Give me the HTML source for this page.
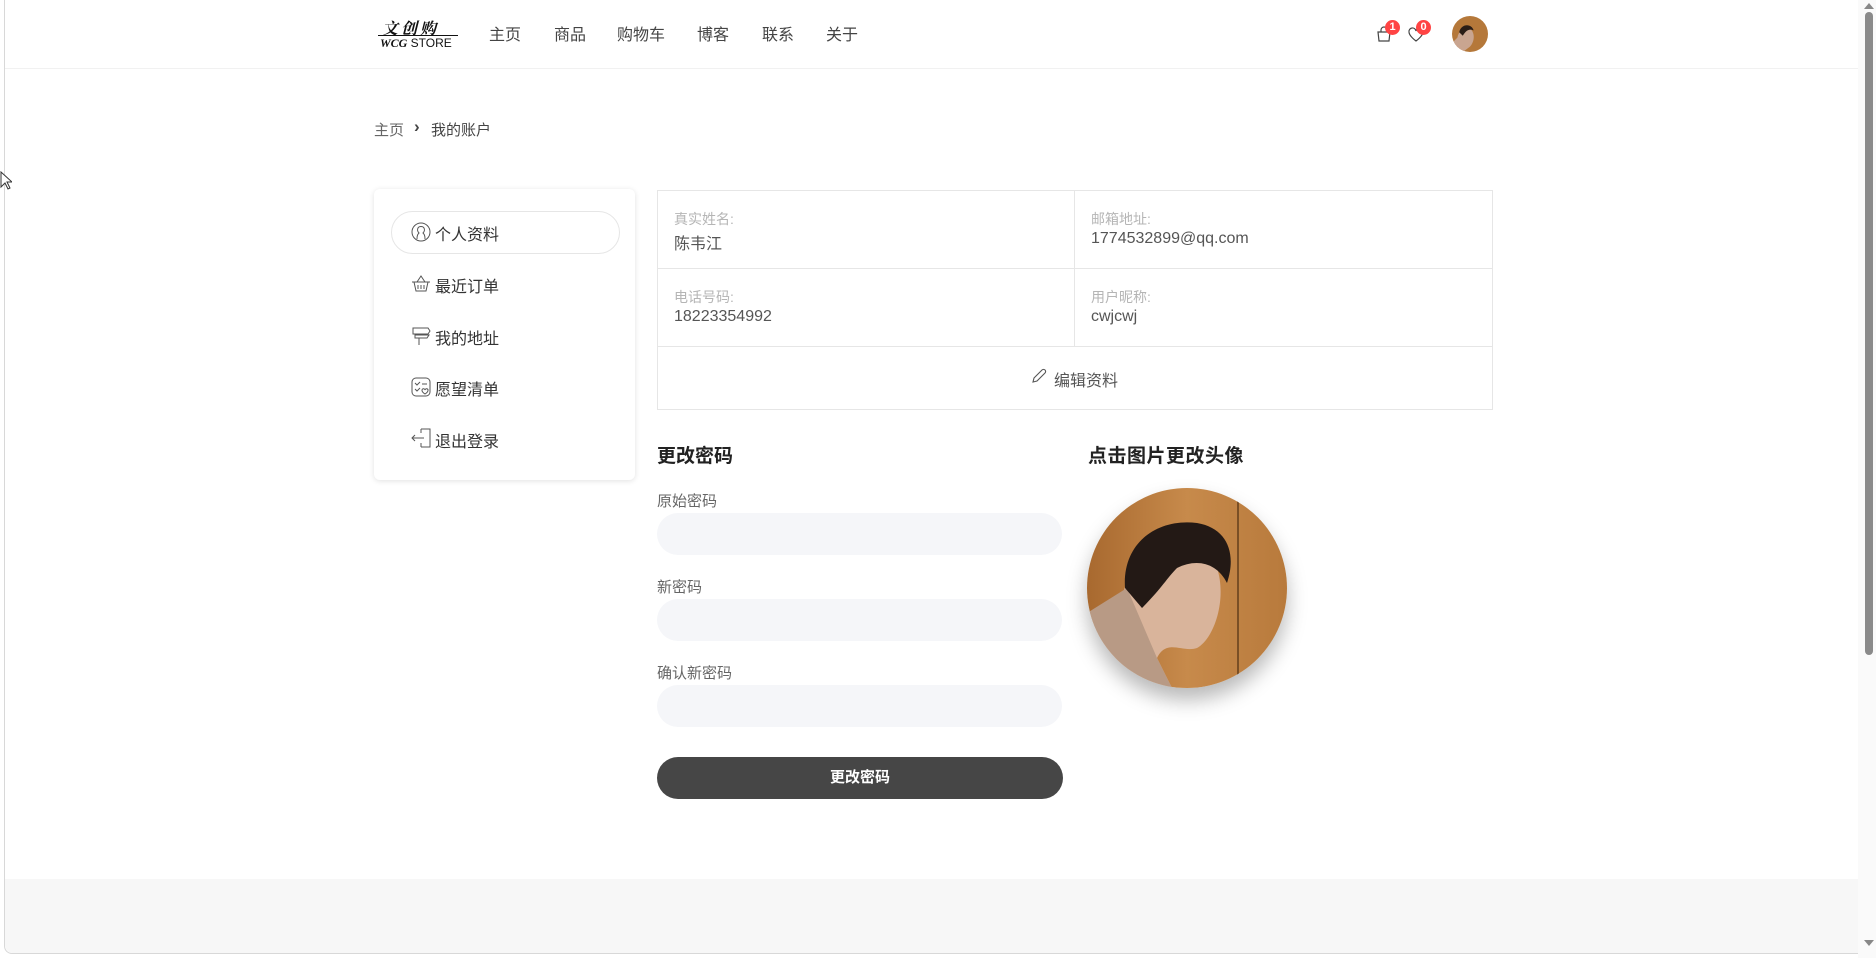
<!DOCTYPE html>
<html><head><meta charset="utf-8"><style>
*{margin:0;padding:0;box-sizing:border-box}
body{width:1876px;height:958px;overflow:hidden;background:#fff;font-family:"Liberation Sans","Noto Sans CJK SC",sans-serif;color:#333;position:relative}
.a{position:absolute}
.nav{font-size:16px;color:#444;top:21px}
.lbl{font-size:14px;color:#b5b5b5}
.val{font-size:16px;color:#555}
.menu{font-size:16px;color:#333;left:435px}
.inp{left:657px;width:405px;height:42px;border-radius:21px;background:#f5f6f9}
.flbl{left:657px;font-size:15px;color:#666}
</style></head><body>
<div class="a" style="left:4px;top:0;width:1854px;height:954px;border-left:1px solid #d8d8d8;border-bottom:1px solid #d8d8d8;border-bottom-left-radius:8px"></div>
<div class="a" style="left:5px;top:68px;width:1853px;height:1px;background:#f1f1f1"></div>
<div class="a" style="left:5px;top:879px;width:1853px;height:74px;background:#f7f7f7;border-bottom-left-radius:8px"></div>
<div class="a" style="left:1858px;top:0;width:18px;height:958px;background:#fafafa"></div>
<div class="a" style="left:1865px;top:12px;width:8px;height:643px;background:#8a8a8a;border-radius:4px"></div>
<div class="a" style="left:1864px;top:3px;width:0;height:0;border-left:5px solid transparent;border-right:5px solid transparent;border-bottom:6px solid #888"></div>
<div class="a" style="left:1864px;top:940px;width:0;height:0;border-left:5px solid transparent;border-right:5px solid transparent;border-top:6px solid #888"></div>
<!-- logo -->
<div class="a" style="left:382px;top:16px;font-family:'Noto Serif CJK SC',serif;font-size:16px;font-style:italic;font-weight:bold;color:#111;letter-spacing:3px">文创购</div>
<div class="a" style="left:378px;top:35px;width:80px;height:1px;background:#111"></div>
<div class="a" style="left:380px;top:36px;font-size:12px;color:#111;white-space:nowrap"><i style="font-family:'Liberation Serif',serif;font-weight:bold">WCG</i> STORE</div>
<div class="a nav" style="left:489px">主页</div>
<div class="a nav" style="left:554px">商品</div>
<div class="a nav" style="left:617px">购物车</div>
<div class="a nav" style="left:697px">博客</div>
<div class="a nav" style="left:762px">联系</div>
<div class="a nav" style="left:826px">关于</div>
<svg class="a" style="left:1375px;top:25px" width="18" height="18" viewBox="0 0 18 18" fill="none" stroke="#444" stroke-width="1.2"><path d="M3 7h12l-1 9H4z"/><path d="M6 7V5a3 3 0 0 1 6 0v2"/></svg>
<div class="a" style="left:1385px;top:20px;width:15px;height:15px;border-radius:50%;background:#f44;color:#fff;font-size:11px;font-weight:bold;text-align:center;line-height:15px">1</div>
<svg class="a" style="left:1407px;top:26px" width="18" height="17" viewBox="0 0 18 17" fill="none" stroke="#444" stroke-width="1.2"><path d="M9 15S2 10 2 6a3.5 3.5 0 0 1 7-1 3.5 3.5 0 0 1 7 1c0 4-7 9-7 9z"/></svg>
<div class="a" style="left:1416px;top:20px;width:15px;height:15px;border-radius:50%;background:#f44;color:#fff;font-size:11px;font-weight:bold;text-align:center;line-height:15px">0</div>
<svg class="a" style="left:1452px;top:16px" width="36" height="36" viewBox="0 0 200 200"><defs><clipPath id="c1"><circle cx="100" cy="100" r="100"/></clipPath></defs><g clip-path="url(#c1)"><rect width="200" height="200" fill="#b5783a"/><path d="M30 120 C40 70 80 60 110 80 C130 110 120 150 100 170 L60 200 L0 200 L0 150Z" fill="#c9a590"/><path d="M40 90 C50 40 110 40 120 80 C100 70 80 75 60 110Z" fill="#2a1d16"/></g></svg>
<!-- breadcrumb -->
<div class="a" style="left:374px;top:119px;font-size:15px;color:#666">主页</div>
<div class="a" style="left:414px;top:117px;font-size:17px;font-weight:bold;color:#444">›</div>
<div class="a" style="left:431px;top:119px;font-size:15px;color:#444">我的账户</div>
<!-- sidebar -->
<div class="a" style="left:374px;top:189px;width:261px;height:291px;border-radius:6px;box-shadow:0 1px 6px rgba(0,0,0,.12)"></div>
<div class="a" style="left:391px;top:211px;width:229px;height:43px;border-radius:22px;border:1px solid #e6e6e6"></div>
<svg class="a" style="left:411px;top:222px" width="20" height="20" viewBox="0 0 20 20" fill="none" stroke="#555" stroke-width="1"><circle cx="10" cy="10" r="9"/><path d="M6 17c0-4 1-5 2-6-1-1-2-3-1-5 1-2 5-2 6 0 1 2 0 4-1 5 1 1 2 2 2 6"/></svg>
<div class="a menu" style="top:221px">个人资料</div>
<svg class="a" style="left:411px;top:274px" width="20" height="18" viewBox="0 0 20 18" fill="none" stroke="#555" stroke-width="1"><path d="M1 8h18M3 8l2 9h10l2-9M6 8l4-6 4 6M7 11v4M10 11v4M13 11v4"/></svg>
<div class="a menu" style="top:273px">最近订单</div>
<svg class="a" style="left:411px;top:326px" width="20" height="20" viewBox="0 0 20 20" fill="none" stroke="#555" stroke-width="1"><path d="M2 2h15l2 3-2 3H2zM4 9h14l-2 3H4zM8 12v7"/></svg>
<div class="a menu" style="top:325px">我的地址</div>
<svg class="a" style="left:411px;top:377px" width="20" height="20" viewBox="0 0 20 20" fill="none" stroke="#555" stroke-width="1"><rect x="1" y="1" width="18" height="18" rx="4"/><path d="M4 6l2 2 3-3M11 7h5M4 12l2 2 3-3"/><path d="M14 17s-3-2-3-3.5a1.5 1.5 0 0 1 3-.5 1.5 1.5 0 0 1 3 .5c0 1.5-3 3.5-3 3.5z"/></svg>
<div class="a menu" style="top:376px">愿望清单</div>
<svg class="a" style="left:411px;top:428px" width="22" height="20" viewBox="0 0 22 20" fill="none" stroke="#555" stroke-width="1"><path d="M10 1h9v18h-9M10 5V1M10 19v-4M1 10h12M4 7l-3 3 3 3"/></svg>
<div class="a menu" style="top:428px">退出登录</div>
<!-- info table -->
<div class="a" style="left:657px;top:190px;width:836px;height:220px;border:1px solid #e6e6e6"></div>
<div class="a" style="left:657px;top:268px;width:836px;height:1px;background:#e6e6e6"></div>
<div class="a" style="left:657px;top:346px;width:836px;height:1px;background:#e6e6e6"></div>
<div class="a" style="left:1074px;top:190px;width:1px;height:156px;background:#e6e6e6"></div>
<div class="a lbl" style="left:674px;top:209px">真实姓名:</div>
<div class="a val" style="left:674px;top:230px">陈韦江</div>
<div class="a lbl" style="left:1091px;top:209px">邮箱地址:</div>
<div class="a val" style="left:1091px;top:230px">1774532899@qq.com</div>
<div class="a lbl" style="left:674px;top:287px">电话号码:</div>
<div class="a val" style="left:674px;top:308px">18223354992</div>
<div class="a lbl" style="left:1091px;top:287px">用户昵称:</div>
<div class="a val" style="left:1091px;top:308px">cwjcwj</div>
<svg class="a" style="left:1031px;top:368px" width="16" height="16" viewBox="0 0 16 16" fill="none" stroke="#555" stroke-width="1.1"><path d="M2 14l1-4 8-8a2 2 0 0 1 3 3l-8 8z"/></svg>
<div class="a val" style="left:1054px;top:367px">编辑资料</div>
<!-- password -->
<div class="a" style="left:657px;top:441px;font-size:19px;font-weight:bold;color:#222">更改密码</div>
<div class="a" style="left:1088px;top:441px;font-size:19px;font-weight:bold;color:#222;letter-spacing:0.5px">点击图片更改头像</div>
<div class="a flbl" style="top:490px">原始密码</div>
<div class="a inp" style="top:513px"></div>
<div class="a flbl" style="top:576px">新密码</div>
<div class="a inp" style="top:599px"></div>
<div class="a flbl" style="top:662px">确认新密码</div>
<div class="a inp" style="top:685px"></div>
<div class="a" style="left:657px;top:757px;width:406px;height:42px;border-radius:21px;background:#464646;color:#fff;font-size:15px;font-weight:bold;text-align:center;line-height:42px">更改密码</div>
<!-- avatar large -->
<div class="a" style="left:1087px;top:488px;width:200px;height:200px;border-radius:50%;box-shadow:0 12px 20px rgba(0,0,0,.28)"></div>
<svg class="a" style="left:1087px;top:488px" width="200" height="200" viewBox="0 0 200 200"><defs><clipPath id="c2"><circle cx="100" cy="100" r="100"/></clipPath><linearGradient id="g" x1="0" x2="1"><stop offset="0" stop-color="#a8692f"/><stop offset=".5" stop-color="#c78a4b"/><stop offset="1" stop-color="#b87a3c"/></linearGradient></defs><g clip-path="url(#c2)"><rect width="200" height="200" fill="url(#g)"/><rect x="150" y="10" width="2" height="190" fill="#7a4f25"/><path d="M35 110 C45 60 90 60 130 80 C140 110 128 150 110 160 C95 165 80 150 70 170 L85 200 L0 200 L0 130Z" fill="#d9b49b"/><path d="M0 125 L40 100 L70 170 L85 200 L0 200Z" fill="#b89a85"/><path d="M38 100 C35 55 70 30 110 35 C140 40 150 65 140 95 C130 75 110 70 90 80 C80 90 75 100 55 120Z" fill="#231915"/></g></svg>
<svg class="a" style="left:0;top:171px" width="12" height="20" viewBox="0 0 12 20"><path d="M1 1v15l4-4 3 6 2-1-3-6h5z" fill="#fff" stroke="#333"/></svg>
</body></html>
